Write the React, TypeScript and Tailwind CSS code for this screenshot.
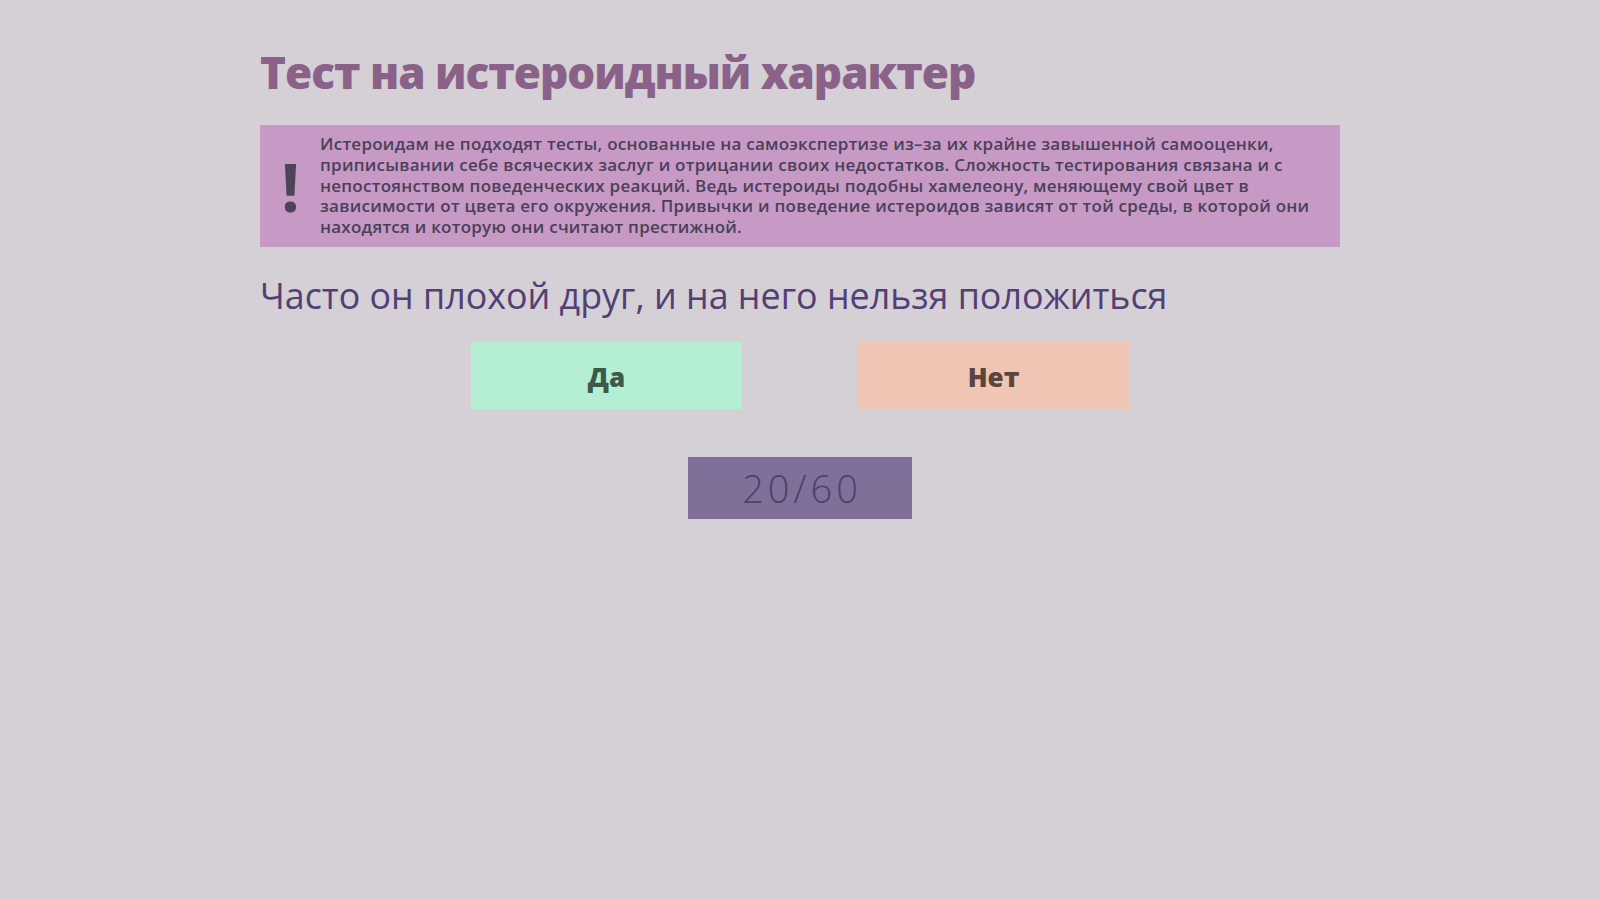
import React from "react";

export default function App() {
  return (
    <div className="min-h-[900px] w-full bg-[#d5cfd6]" style={{ fontFamily: "'Open Sans', sans-serif" }}>
      <div className="mx-auto w-[1080px] pt-[44px]">
        <h1 className="text-[44px] font-extrabold leading-[56px] tracking-[-1px] text-[#8a6188]">
          Тест на истероидный характер
        </h1>
        <div className="mt-[25px] flex h-[122px] items-center bg-[#c69ac5]">
          <div className="flex w-[60px] shrink-0 justify-center pl-[1px] text-[66px] font-bold leading-none text-[#4d4458]">!</div>
          <p className="pr-[24px] text-[17px] font-semibold leading-[20.7px] tracking-[0.25px] text-[#4a4058]">
            Истероидам не подходят тесты, основанные на самоэкспертизе из–за их крайне завышенной самооценки, приписывании себе всяческих заслуг и отрицании своих недостатков. Сложность тестирования связана и с непостоянством поведенческих реакций. Ведь истероиды подобны хамелеону, меняющему свой цвет в зависимости от цвета его окружения. Привычки и поведение истероидов зависят от той среды, в которой они находятся и которую они считают престижной.
          </p>
        </div>
        <h2 className="mt-[26px] text-[35.8px] font-normal leading-[44px] text-[#523f75]">
          Часто он плохой друг, и на него нельзя положиться
        </h2>
        <div className="mt-[25px] flex justify-center gap-[116px]">
          <button className="flex h-[67px] w-[271px] items-center justify-center pt-[4px] bg-[#b4efd4] text-[26px] font-extrabold text-[#3b5a4c]">
            Да
          </button>
          <button className="flex h-[67px] w-[271px] items-center justify-center pt-[4px] bg-[#f0c5b3] text-[26px] font-extrabold text-[#5a4540]">
            Нет
          </button>
        </div>
        <div className="mt-[48px] flex justify-center">
          <div className="flex h-[62px] w-[224px] items-center justify-center pl-[4px] bg-[#806f99] text-[38px] font-light tracking-[4px] text-[#4e3f6e]">
            20/60
          </div>
        </div>
      </div>
    </div>
  );
}
